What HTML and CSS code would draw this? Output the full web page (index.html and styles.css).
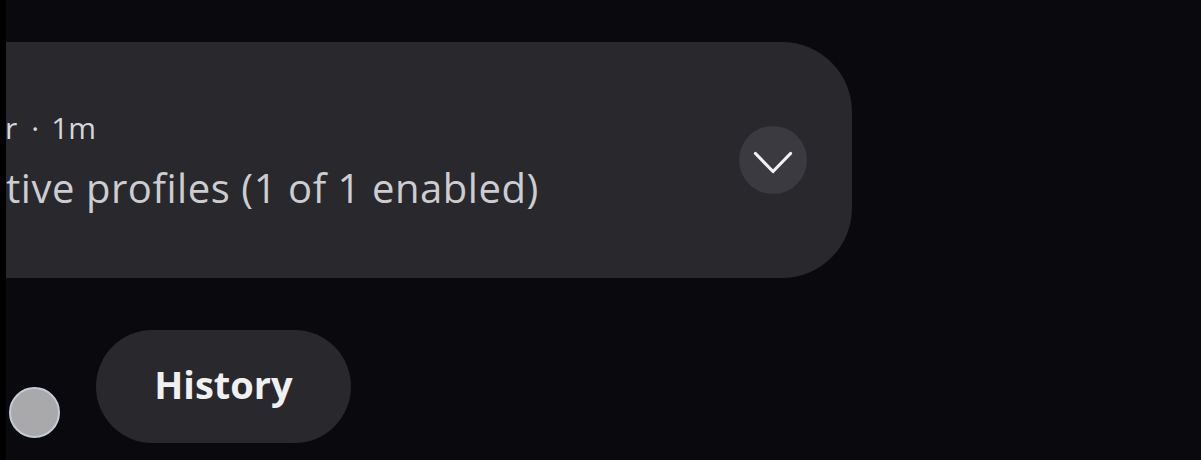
FILE: index.html
```html
<!DOCTYPE html>
<html>
<head>
<meta charset="utf-8">
<link rel="stylesheet" href="styles.css">
</head>
<body>
<div class="edge"></div>
<div class="main">
  <div class="card">
    <div class="texts">
      <div class="title"><span>r</span><span class="sep">·</span><span>1m</span></div>
      <div class="body">tive profiles (1 of 1 enabled)</div>
    </div>
    <div class="expand">
      <svg width="40" height="24" viewBox="0 0 40 24"><path d="M2.5 2.5 L20 20.5 L37.5 2.5" fill="none" stroke="#f2f2f4" stroke-width="3.2" stroke-linecap="round" stroke-linejoin="round"/></svg>
    </div>
  </div>
  <div class="row">
    <div class="dot"></div>
    <div class="pill">History</div>
  </div>
</div>
</body>
</html>
```
FILE: styles.css
```css
html, body {
  margin: 0;
  padding: 0;
}
body {
  display: flex;
  width: 1201px;
  height: 460px;
  overflow: hidden;
  background: #0a0a0e;
  font-family: "Open Sans", Roboto, sans-serif;
}
.edge {
  width: 6px;
  background: #000;
  flex: none;
}
.main {
  flex: 1;
  display: flex;
  flex-direction: column;
}
.card {
  margin-top: 42px;
  width: 846px;
  height: 236px;
  box-sizing: border-box;
  background: #28282d;
  border-radius: 0 70px 70px 0;
  display: flex;
  align-items: center;
  padding-left: 0;
  padding-right: 45px;
}
.texts {
  flex: 1;
  margin-top: 3px;
}
.title {
  font-size: 30px;
  line-height: 34px;
  color: #d6d6da;
  display: flex;
  margin-left: -1px;
}
.title .sep {
  margin: 0 12px 0 14px;
}
.body {
  margin-top: 18px;
  font-size: 40px;
  line-height: 50px;
  color: #cdcdd1;
  letter-spacing: 0.55px;
}
.expand {
  width: 68px;
  height: 68px;
  border-radius: 50%;
  background: #3a3a40;
  display: flex;
  align-items: center;
  justify-content: center;
  flex: none;
}
.expand svg {
  margin-top: 6px;
}
.row {
  margin-top: 52px;
  display: flex;
  align-items: flex-end;
  gap: 36px;
}
.dot {
  width: 47px;
  height: 47px;
  margin-left: 3px;
  margin-bottom: 5px;
  border-radius: 50%;
  background: #a9a9ab;
  border: 2px solid #c3cad8;
}
.pill {
  width: 255px;
  height: 113px;
  box-sizing: border-box;
  padding-bottom: 6px;
  border-radius: 57px;
  background: #28282d;
  color: #f0f0f2;
  font-weight: 700;
  font-size: 38px;
  display: flex;
  align-items: center;
  justify-content: center;
}
```
